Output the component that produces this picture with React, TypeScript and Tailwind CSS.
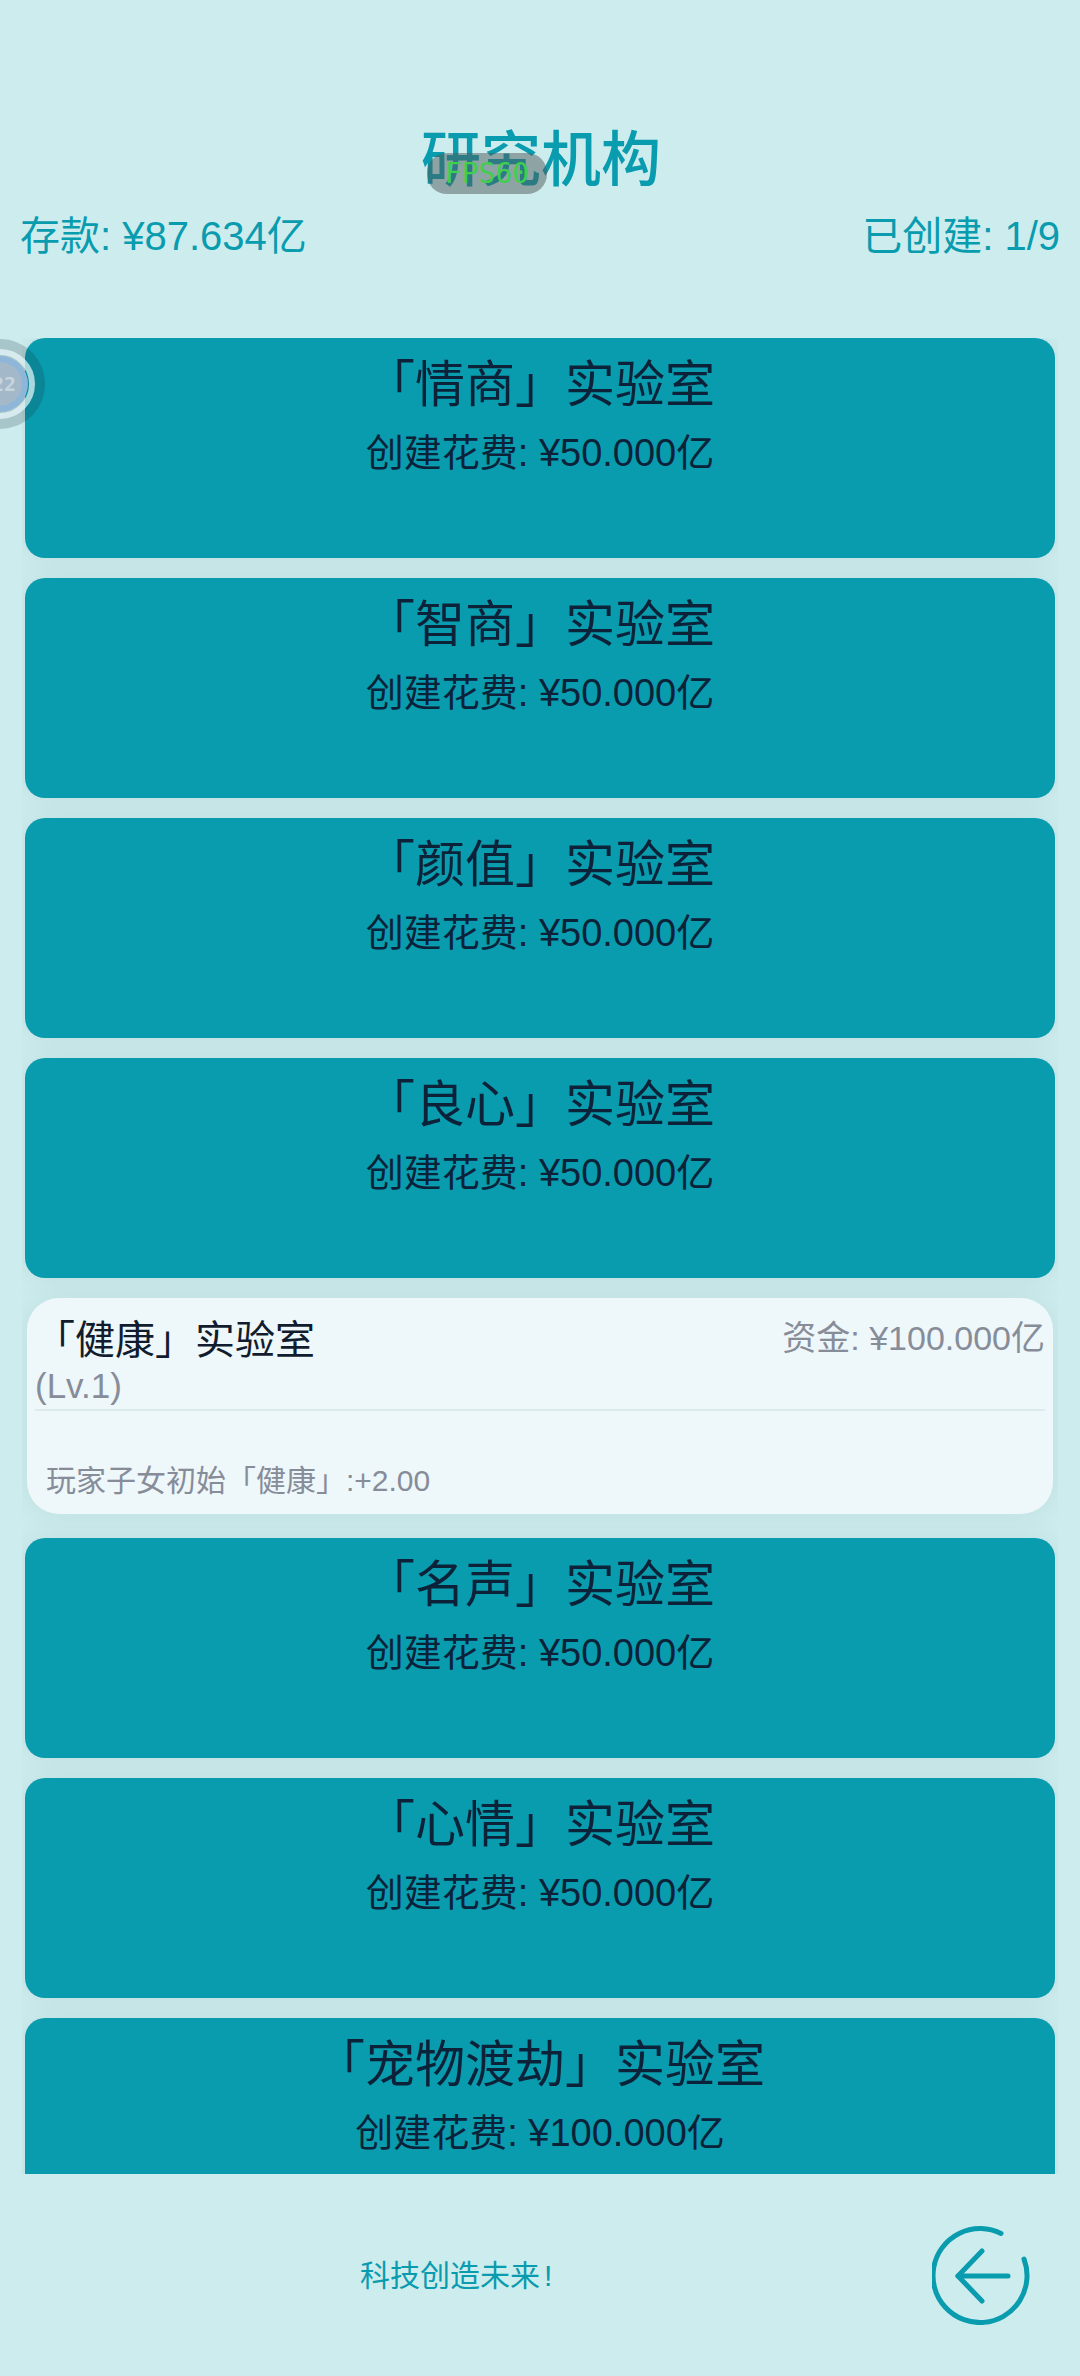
const sans = "font-['Liberation_Sans','Noto_Sans_CJK_SC',sans-serif]";

const labs = [
  { name: "「情商」实验室", cost: "¥50.000亿" },
  { name: "「智商」实验室", cost: "¥50.000亿" },
  { name: "「颜值」实验室", cost: "¥50.000亿" },
  { name: "「良心」实验室", cost: "¥50.000亿" },
  { name: "「健康」实验室", built: true },
  { name: "「名声」实验室", cost: "¥50.000亿" },
  { name: "「心情」实验室", cost: "¥50.000亿" },
  { name: "「宠物渡劫」实验室", cost: "¥100.000亿" },
];

function LockedCard({ name, cost }: { name: string; cost?: string }) {
  return (
    <div className="h-[220px] shrink-0 rounded-[20px] bg-[#099bae] pt-[15px] text-center text-[#0c2238] shadow-[0_0_28px_rgba(0,60,70,0.08)]">
      <div className="text-[50px] leading-[64px]">{name}</div>
      <div className="mt-[8px] text-[38px] leading-[56px]">创建花费: {cost}</div>
    </div>
  );
}

function BuiltCard({ name }: { name: string }) {
  return (
    <div className="h-[220px] shrink-0 px-[2px]">
      <div className="h-[216px] rounded-[32px] bg-[#eef7fa] shadow-[0_0_28px_rgba(0,60,70,0.08)]">
        <div className="flex items-start justify-between pl-[8px] pr-[8px] pt-[15px]">
          <div>
            <div className="text-[40px] leading-[54px] text-[#111c2e]">{name}</div>
            <div className="pb-[4px] text-[35px] leading-[38px] text-[#878c99]">(Lv.1)</div>
          </div>
          <div className="text-[34px] leading-[50px] text-[#878c99]">资金: ¥100.000亿</div>
        </div>
        <div className="mx-[8px] h-[2px] bg-[#dcebee]" />
        <div className="mt-[48px] pl-[19px] text-[30px] leading-[44px] text-[#878c99]">
          玩家子女初始「健康」:+2.00
        </div>
      </div>
    </div>
  );
}

function BackIcon() {
  return (
    <svg width="100" height="100" viewBox="0 0 100 100" fill="none" stroke="#099bae" strokeWidth="5" strokeLinecap="round" strokeLinejoin="round">
      <path d="M69 8.5 A47 47 0 1 0 92 34" />
      <path d="M76 51 H26" />
      <path d="M50 26 L26 51 L50 76" />
    </svg>
  );
}

function FloatBall() {
  return (
    <div className="absolute left-[-45px] top-[339px] flex h-[90px] w-[90px] items-center justify-center rounded-full bg-[rgba(20,50,60,0.2)]">
      <div className="flex h-[70px] w-[70px] items-center justify-center rounded-full border-[6px] border-[rgba(235,250,252,0.7)]">
        <div className="flex h-[56px] w-[56px] items-center justify-center rounded-full bg-[#8db6d8]">
          <div className="flex h-[44px] w-[44px] items-center justify-end rounded-full bg-[#a3b8c8] pr-[6px]">
            <span className="font-['DejaVu_Sans_Mono',monospace] text-[20px] font-bold leading-none text-[#c6d6e0]">22</span>
          </div>
        </div>
      </div>
    </div>
  );
}

export default function App() {
  return (
    <div className={`relative flex h-[2376px] w-[1080px] flex-col overflow-hidden bg-[#cdecee] ${sans}`}>
      <div className="h-[338px] shrink-0 pt-[120px] text-[#099bae]">
        <h1 className="translate-y-[3px] pl-[2px] text-center text-[60px] font-medium leading-[76px]">研究机构</h1>
        <div className="mt-[11px] flex justify-between px-[20px] text-[40px] leading-[58px]">
          <span>存款: ¥87.634亿</span>
          <span>已创建: 1/9</span>
        </div>
      </div>

      <div className="mx-[22px] flex h-[1836px] shrink-0 flex-col gap-[20px] overflow-hidden px-[3px]">
        {labs.map((lab) =>
          lab.built ? (
            <BuiltCard key={lab.name} name={lab.name} />
          ) : (
            <LockedCard key={lab.name} name={lab.name} cost={lab.cost} />
          ),
        )}
      </div>

      <div className="flex flex-1 items-center justify-between pl-[360px] pr-[48px]">
        <span className="text-[30px] text-[#099bae]">科技创造未来<span className="ml-[4px]">!</span></span>
        <BackIcon />
      </div>

      <div className="absolute left-[427px] top-[153px] flex h-[41px] w-[120px] items-center justify-center rounded-[20px] bg-[rgba(80,90,90,0.5)]">
        <span className="font-['DejaVu_Sans_Mono',monospace] text-[28px] leading-none text-[#3fcf4d]">FPS60</span>
      </div>
      <FloatBall />
    </div>
  );
}
